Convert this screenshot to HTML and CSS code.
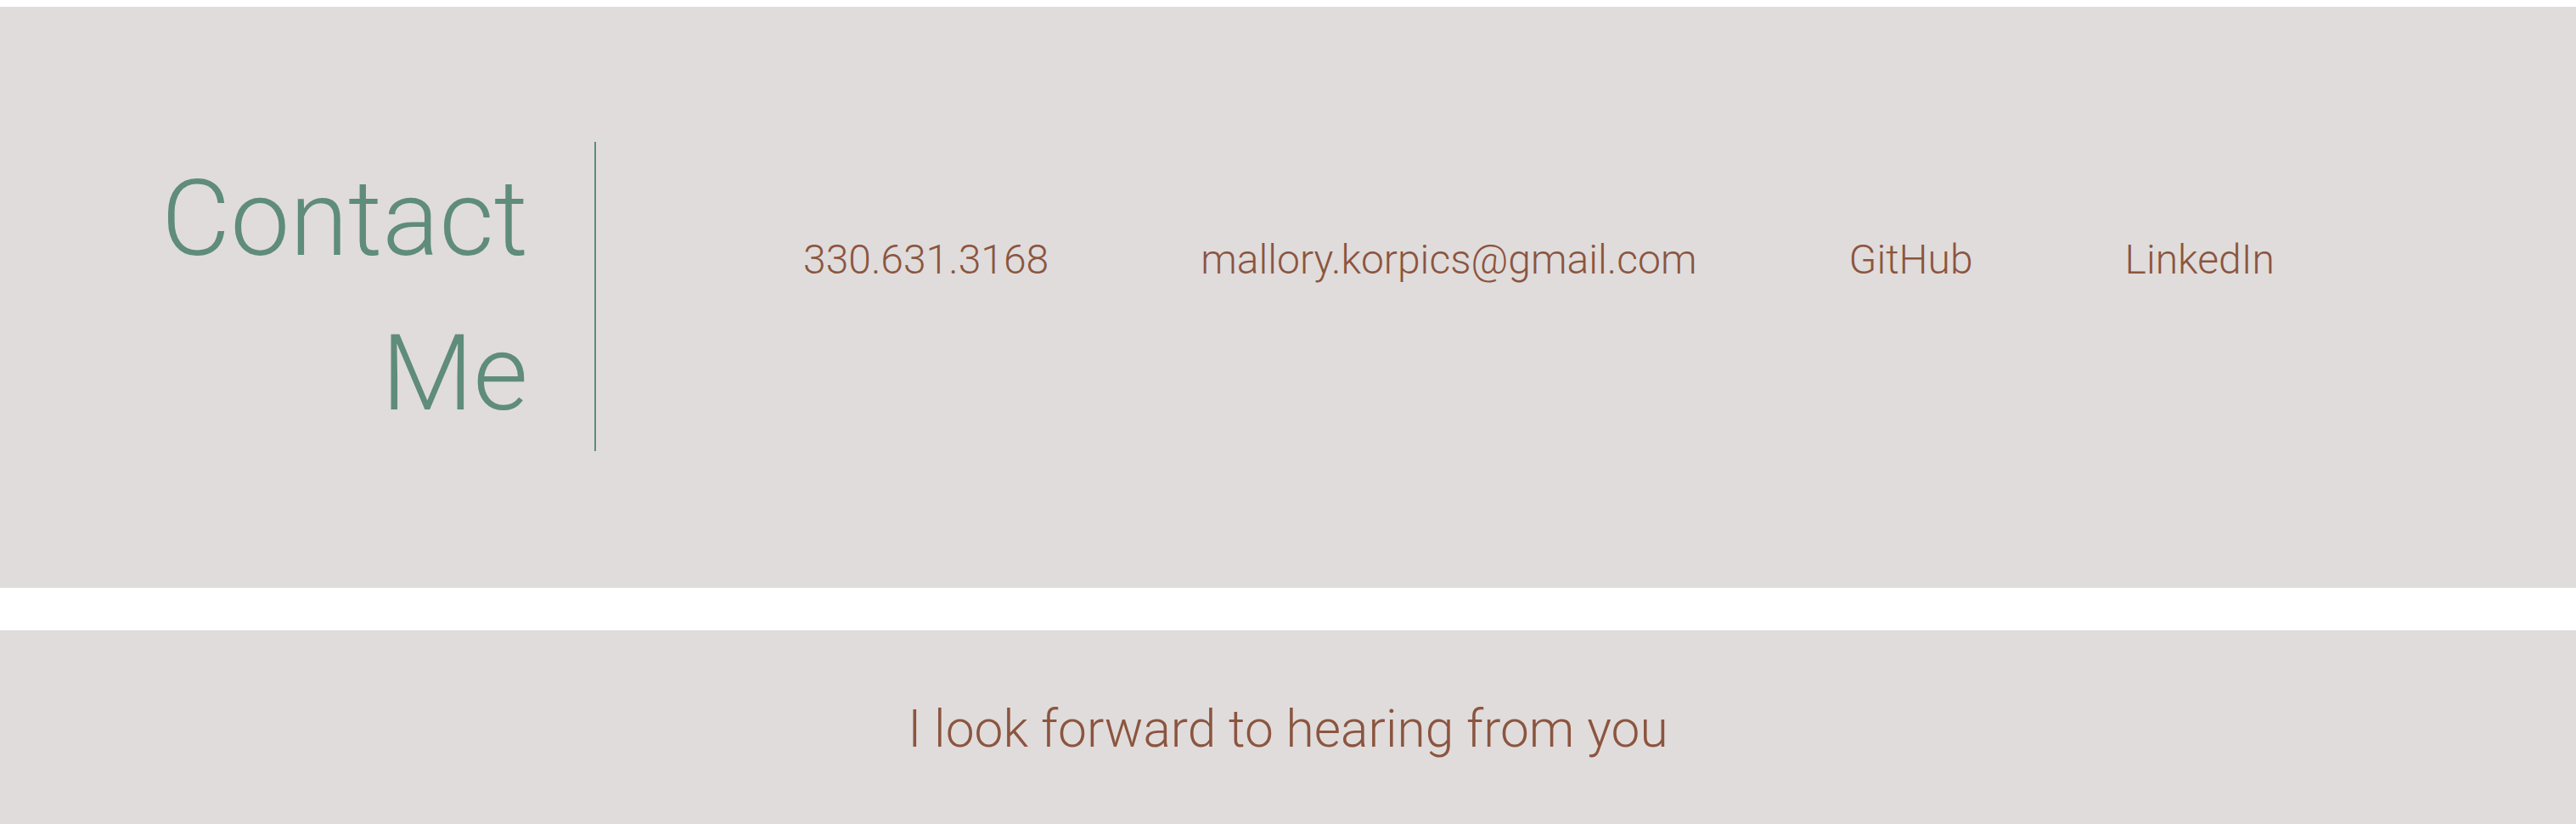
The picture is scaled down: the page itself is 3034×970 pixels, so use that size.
FILE: index.html
```html
<!DOCTYPE html>
<html lang="en">
<head>
<meta charset="utf-8">
<title>Contact Me</title>
<link rel="stylesheet" href="styles.css">
</head>
<body>
  <section class="contact">
    <h1 class="contact-title">Contact Me</h1>
    <ul class="contact-links">
      <li><a href="#">330.631.3168</a></li>
      <li><a href="#">mallory.korpics@gmail.com</a></li>
      <li><a href="#">GitHub</a></li>
      <li><a href="#">LinkedIn</a></li>
    </ul>
  </section>
  <footer class="closing">
    <p class="closing-text">I look forward to hearing from you</p>
  </footer>
</body>
</html>
```

FILE: styles.css
```css
html, body {
  margin: 0;
  padding: 0;
  background: #ffffff;
}

body {
  padding-top: 8px;
  font-family: Roboto, "Liberation Sans", Arial, sans-serif;
  font-weight: 300;
}

.contact {
  display: flex;
  align-items: flex-start;
  box-sizing: border-box;
  height: 684px;
  padding-top: 159px;
  background: #e0dcdb;
}

.contact-title {
  box-sizing: content-box;
  width: 622px;
  margin: 0;
  padding: 0 78px 0 0;
  border-right: 2px solid #5f8c7b;
  font-size: 125px;
  font-weight: 300;
  line-height: 182px;
  text-align: right;
  color: #5f8c7b;
}

.contact-links {
  display: flex;
  gap: 179px;
  margin: 111px 0 0 244px;
  padding: 0;
  list-style: none;
  font-size: 48px;
  line-height: 56px;
}

.contact-links a {
  color: #8b5540;
  text-decoration: none;
}

.closing {
  margin-top: 50px;
  height: 240px;
  box-sizing: border-box;
  padding-top: 82px;
  background: #e0dcdb;
}

.closing-text {
  margin: 0;
  text-align: center;
  font-size: 60.5px;
  line-height: 70px;
  color: #8b5540;
}
```
